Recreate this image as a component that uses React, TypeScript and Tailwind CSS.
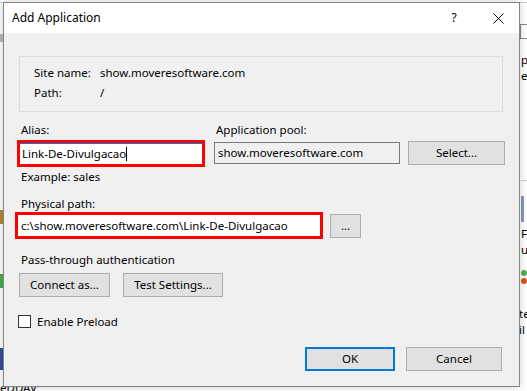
import React from 'react';

const font = "font-['Segoe_UI','Noto_Sans','Liberation_Sans',sans-serif]";

const Btn: React.FC<{ label: string; w: string; primary?: boolean }> = ({ label, w, primary }) => (
  <div
    className={`${w} h-[24px] flex items-center justify-center bg-[#e1e1e1] text-black ${
      primary ? 'border-2 border-[#0078d7]' : 'border border-[#adadad]'
    }`}
  >
    {label}
  </div>
);

const App: React.FC = () => {
  return (
    <div className={`relative w-[527px] h-[391px] bg-white overflow-hidden text-[11.5px] ${font}`}>
      {/* window behind the dialog */}
      <div className="absolute left-0 top-[2px] w-[527px] h-px bg-[#b9cfe8]" />
      <div className="absolute left-[520px] top-[24px] w-[7px] h-[15px] border-l border-y border-[#888]" />
      <div className="absolute left-[521px] top-[52px] leading-[16px] text-black">p<br />e</div>
      <div className="absolute left-[521px] top-[180px] w-[7px] h-px bg-[#b9cfe8]" />
      <div className="absolute left-[521px] top-[196px] w-[3px] h-[26px] bg-[#8a9ab5]" />
      <div className="absolute left-[521px] top-[226px] leading-[16px] text-black">F<br />u</div>
      <div className="absolute left-[521px] top-[270px] w-[6px] h-[6px] rounded-full bg-[#4caf50]" />
      <div className="absolute left-[521px] top-[278px] w-[6px] h-[6px] rounded-full bg-[#e0501c]" />
      <div className="absolute left-[519px] top-[306px] leading-[16px] text-black">te<br />il</div>
      <div className="absolute left-0 top-[34px] w-[3px] h-[8px] bg-[#bbb]" />
      <div className="absolute left-0 top-[210px] w-[3px] h-[14px] bg-[#b98a2a]" />
      <div className="absolute left-0 top-[274px] w-[3px] h-[14px] bg-[#47b04b]" />
      <div className="absolute left-0 top-[348px] w-[3px] h-[22px] bg-[#3050a0]" />
      <div className="absolute left-0 top-[383px] leading-[10px] text-black">eDDAV</div>

      {/* dialog */}
      <div className="relative ml-[3px] mt-[2px] w-[517px] h-[385px] border border-[#858585] bg-[#f0f0f0] flex flex-col shadow-[0_0_8px_rgba(0,0,0,0.2)]">
        <div className="h-[30px] bg-white flex items-center pl-[8px] pr-[15px] text-[12px] text-black">
          <span className="flex-1">Add Application</span>
          <span className="w-[12px] mr-[33px] text-center">?</span>
          <svg width="11" height="11" viewBox="0 0 11 11">
            <path d="M0.5 0.5 L10.5 10.5 M10.5 0.5 L0.5 10.5" stroke="#000" strokeWidth="1" />
          </svg>
        </div>

        <div className="flex flex-col pl-[15px] pr-[16px] text-black">
          <div className="mt-[23px] h-[56px] border border-[#dcdcdc] pl-[14px] pt-[6px]">
            <div className="flex h-[20px] items-center">
              <span className="w-[66px]">Site name:</span>
              <span>show.moveresoftware.com</span>
            </div>
            <div className="flex h-[20px] items-center">
              <span className="w-[66px]">Path:</span>
              <span>/</span>
            </div>
          </div>

          <div className="mt-[10px] flex items-start">
            <div className="flex flex-col">
              <span className="ml-[2px] h-[16px] leading-[16px]">Alias:</span>
              <div className="mt-[2px] -ml-[2px] w-[188px] h-[27px] border-[3px] border-[#ff0000] bg-white">
                <div className="h-full border-t border-[#0078d7] flex items-center pl-[2px] pb-[1px]">
                  Link-De-Divulgacao<span className="inline-block w-px h-[14px] bg-black" />
                </div>
              </div>
              <span className="ml-[2px] mt-[2px] h-[16px] leading-[16px]">Example: sales</span>
            </div>
            <div className="ml-[9px] flex flex-col">
              <span className="ml-[2px] h-[16px] leading-[16px]">Application pool:</span>
              <div className="mt-[4px] w-[186px] h-[22px] border border-[#7a7a7a] bg-[#f0f0f0] flex items-center pl-[3px]">
                show.moveresoftware.com
              </div>
            </div>
            <div className="ml-[8px] mt-[19px]">
              <Btn label="Select..." w="w-[97px]" />
            </div>
          </div>

          <span className="mt-[11px] ml-[2px] h-[16px] leading-[16px]">Physical path:</span>
          <div className="flex items-center">
            <div className="-ml-[4px] w-[308px] h-[27px] border-[3px] border-[#ff0000] bg-white flex items-center pl-[3px]">
              c:\show.moveresoftware.com\Link-De-Divulgacao
            </div>
            <div className="ml-[7px]">
              <Btn label="..." w="w-[31px]" />
            </div>
          </div>

          <span className="mt-[13px] ml-[2px] h-[16px] leading-[16px]">Pass-through authentication</span>
          <div className="mt-[5px] flex gap-[13px]">
            <Btn label="Connect as..." w="w-[91px]" />
            <Btn label="Test Settings..." w="w-[100px]" />
          </div>

          <div className="mt-[18px] h-[13px] flex items-center -ml-[1px]">
            <div className="w-[13px] h-[13px] border border-[#333] bg-white" />
            <span className="ml-[6px] leading-[16px]">Enable Preload</span>
          </div>

          <div className="mt-[19px] flex justify-end gap-[11px] pr-[1px]">
            <Btn label="OK" w="w-[90px]" primary />
            <Btn label="Cancel" w="w-[96px]" />
          </div>
        </div>
      </div>
    </div>
  );
};

export default App;
